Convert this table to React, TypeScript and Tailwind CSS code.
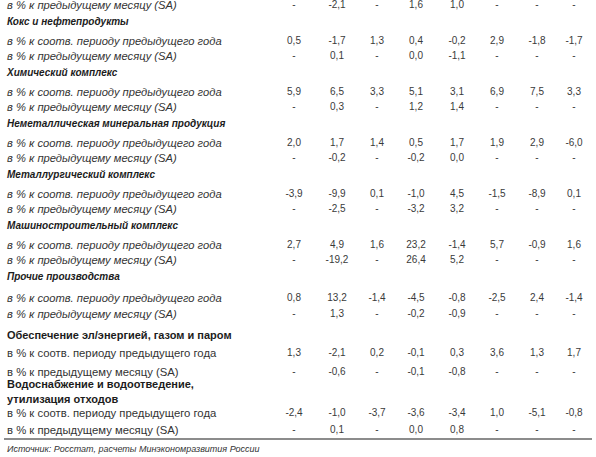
import React from "react";

type Kind = "head" | "yoy" | "mom";

interface RowDef {
  kind: Kind;
  text: string;
  values?: string[];
  pad: string; // space above the line
  italic: boolean;
}

const YOY_I = "в % к соотв. периоду предыдущего года";
const MOM = "в % к предыдущему месяцу (SA)";

const dash = (a: string, b: string, c: string): string[] => ["-", a, "-", b, c, "-", "-", "-"];

const rows: RowDef[] = [
  { kind: "mom", text: MOM, values: dash("-2,1", "1,6", "1,0"), pad: "pt-0", italic: true },

  { kind: "head", text: "Кокс и нефтепродукты", pad: "pt-[5px]", italic: true },
  { kind: "yoy", text: YOY_I, values: ["0,5", "-1,7", "1,3", "0,4", "-0,2", "2,9", "-1,8", "-1,7"], pad: "pt-[7px]", italic: true },
  { kind: "mom", text: MOM, values: dash("0,1", "0,0", "-1,1"), pad: "pt-[3px]", italic: true },

  { kind: "head", text: "Химический комплекс", pad: "pt-[5px]", italic: true },
  { kind: "yoy", text: YOY_I, values: ["5,9", "6,5", "3,3", "5,1", "3,1", "6,9", "7,5", "3,3"], pad: "pt-[7px]", italic: true },
  { kind: "mom", text: MOM, values: dash("0,3", "1,2", "1,4"), pad: "pt-[3px]", italic: true },

  { kind: "head", text: "Неметаллическая минеральная продукция", pad: "pt-[5px]", italic: true },
  { kind: "yoy", text: YOY_I, values: ["2,0", "1,7", "1,4", "0,5", "1,7", "1,9", "2,9", "-6,0"], pad: "pt-[7px]", italic: true },
  { kind: "mom", text: MOM, values: dash("-0,2", "-0,2", "0,0"), pad: "pt-[3px]", italic: true },

  { kind: "head", text: "Металлургический комплекс", pad: "pt-[5px]", italic: true },
  { kind: "yoy", text: YOY_I, values: ["-3,9", "-9,9", "0,1", "-1,0", "4,5", "-1,5", "-8,9", "0,1"], pad: "pt-[7px]", italic: true },
  { kind: "mom", text: MOM, values: dash("-2,5", "-3,2", "3,2"), pad: "pt-[3px]", italic: true },

  { kind: "head", text: "Машиностроительный комплекс", pad: "pt-[5px]", italic: true },
  { kind: "yoy", text: YOY_I, values: ["2,7", "4,9", "1,6", "23,2", "-1,4", "5,7", "-0,9", "1,6"], pad: "pt-[7px]", italic: true },
  { kind: "mom", text: MOM, values: dash("-19,2", "26,4", "5,2"), pad: "pt-[3px]", italic: true },

  { kind: "head", text: "Прочие производства", pad: "pt-[5px]", italic: true },
  { kind: "yoy", text: YOY_I, values: ["0,8", "13,2", "-1,4", "-4,5", "-0,8", "-2,5", "2,4", "-1,4"], pad: "pt-[9px]", italic: true },
  { kind: "mom", text: MOM, values: dash("1,3", "-0,2", "-0,9"), pad: "pt-[4px]", italic: true },

  { kind: "head", text: "Обеспечение эл/энергией, газом и паром", pad: "pt-[9px]", italic: false },
  { kind: "yoy", text: YOY_I, values: ["1,3", "-2,1", "0,2", "-0,1", "0,3", "3,6", "1,3", "1,7"], pad: "pt-[6px]", italic: false },
  { kind: "mom", text: MOM, values: dash("-0,6", "-0,1", "-0,8"), pad: "pt-[7px]", italic: false },

  { kind: "head", text: "Водоснабжение и водоотведение,", pad: "pt-0", italic: false },
  { kind: "head", text: "утилизация отходов", pad: "pt-[3px]", italic: false },
  { kind: "yoy", text: YOY_I, values: ["-2,4", "-1,0", "-3,7", "-3,6", "-3,4", "1,0", "-5,1", "-0,8"], pad: "pt-[2px]", italic: false },
  { kind: "mom", text: MOM, values: dash("0,1", "0,0", "0,8"), pad: "pt-[5px]", italic: false },
];

// number column widths, so the cell centres sit where the scan has them
const colW = ["w-[40px]", "w-[46px]", "w-[34px]", "w-[44px]", "w-[38px]", "w-[42px]", "w-[38px]", "w-[36px]"];

function Row({ row, last }: { row: RowDef; last: boolean }) {
  const isHead = row.kind === "head";
  let labelStyle = "text-[11px] text-[#333]";
  if (isHead && row.italic) labelStyle = "text-[10px] font-bold italic text-[#1c1c1c]";
  else if (isHead) labelStyle = "text-[11px] font-bold text-[#1c1c1c]";
  else if (row.italic) labelStyle = "text-[11.2px] italic text-[#333]";
  else labelStyle = "text-[11.3px] text-[#333]";

  return (
    <div className={`${row.pad} ${last ? "-ml-[3px] pl-[3px] pb-[2px] border-b-2 border-[#8c8c8c]" : ""}`}>
      <div className="flex h-[12px] items-center leading-[12px]">
        <div className={`w-[267px] shrink-0 whitespace-nowrap ${labelStyle}`}>{row.text}</div>
        {row.values && (
          <div className="flex text-[10px] text-[#3a3a3a]">
            {row.values.map((v, i) => (
              <div key={i} className={`${colW[i]} text-center`}>
                {v}
              </div>
            ))}
          </div>
        )}
      </div>
    </div>
  );
}

export default function App() {
  return (
    <div className="w-[596px] h-[457px] overflow-hidden bg-white font-['Liberation_Sans',Arial,sans-serif]">
      <div className="-mt-px pl-[7px] pr-[4px]">
        {rows.map((r, i) => (
          <Row key={i} row={r} last={i === rows.length - 1} />
        ))}
        <div className="pt-[4px] text-[9px] italic leading-[10px] text-[#333]">
          Источник: Росстат, расчеты Минэкономразвития России
        </div>
      </div>
    </div>
  );
}
